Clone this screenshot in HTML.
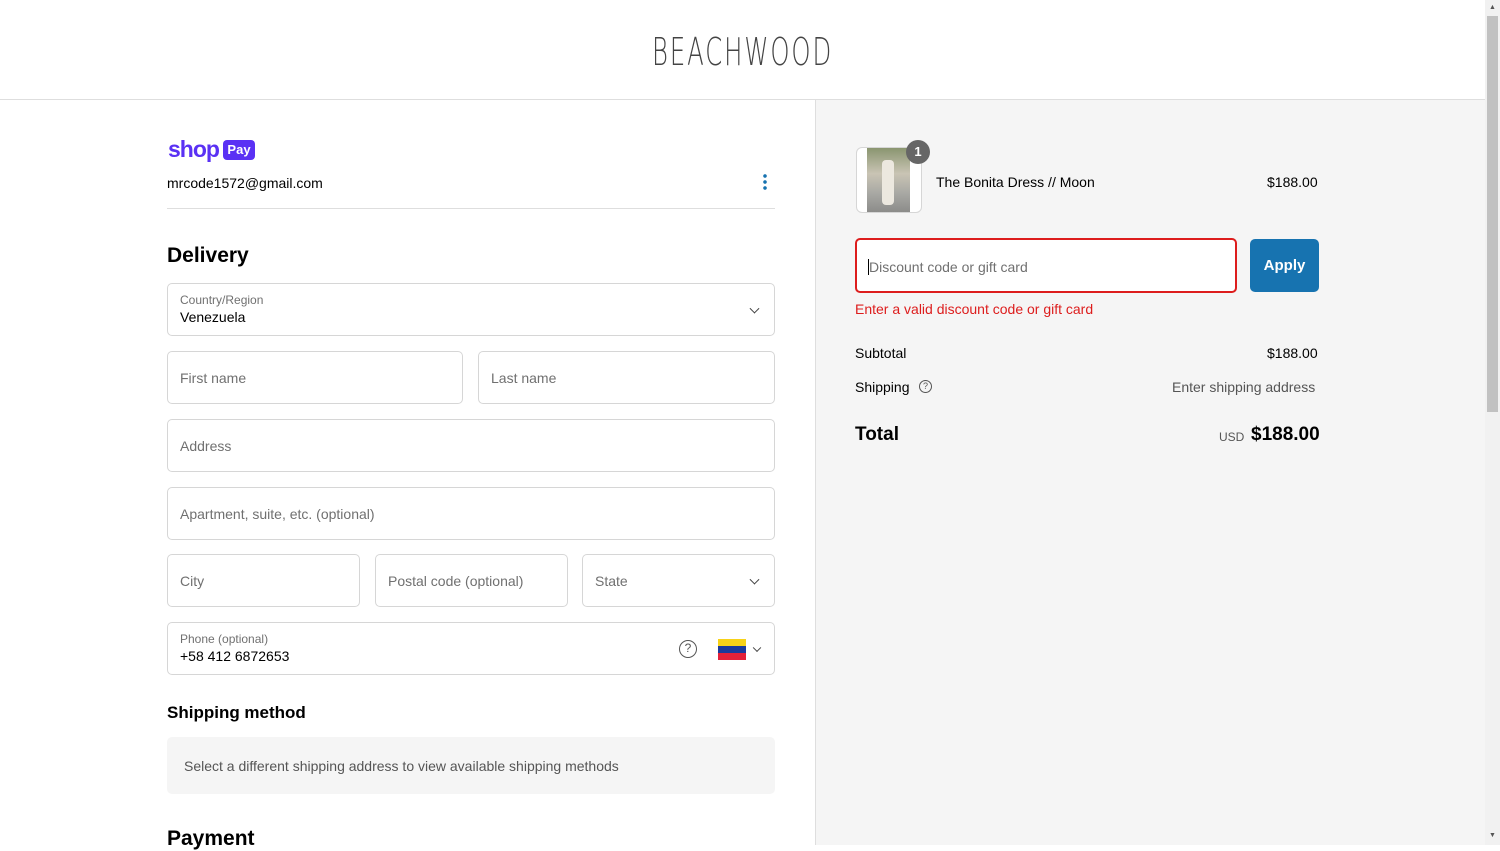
<!DOCTYPE html>
<html><head><meta charset="utf-8"><style>
*{box-sizing:border-box;margin:0;padding:0}
body{width:1500px;height:845px;overflow:hidden;font-family:"Liberation Sans",sans-serif;color:#000;background:#fff;position:relative}
.hdr{position:absolute;left:0;top:0;width:1485px;height:100px;border-bottom:1px solid #dedede;background:#fff}
.logo{position:absolute;left:652px;top:30px;font-size:38px;letter-spacing:3px;color:#444;transform:scaleX(0.64);transform-origin:left;font-family:"DejaVu Sans",sans-serif;font-weight:200}
.right{position:absolute;left:815px;top:100px;width:670px;height:745px;background:#f5f5f5;border-left:1px solid #dedede}
.sb{position:absolute;left:1485px;top:0;width:15px;height:845px;background:#f1f1f1}
.thumb{position:absolute;left:1487px;top:16px;width:11px;height:396px;background:#c1c1c1}
.a{position:absolute}
.f{position:absolute;border:1px solid #d6d6d6;border-radius:5px;background:#fff;font-size:14px;color:#707070;padding-left:12px;display:flex;align-items:center}
.lbl{font-size:12px;color:#707070}
.val{font-size:14px;color:#000}
.chev{position:absolute;right:16px;top:50%;width:7px;height:7px;border-right:1.5px solid #444;border-bottom:1.5px solid #444;transform:translateY(-70%) rotate(45deg)}
</style></head><body>
<div class="hdr"><div class="logo">BEACHWOOD</div></div>
<div class="sb"></div><div class="thumb"></div>
<div class="a" style="left:1489px;top:4px;font-size:7px;color:#555">▲</div>
<div class="a" style="left:1489px;top:832px;font-size:7px;color:#555">▼</div>

<div class="a" style="left:168px;top:136px;font-size:23px;font-weight:bold;color:#5a31f4;letter-spacing:-1px">shop</div>
<div class="a" style="left:223px;top:140px;width:32px;height:20px;background:#5a31f4;border-radius:4px;color:#fff;font-size:13px;font-weight:bold;text-align:center;line-height:20px">Pay</div>
<div class="a" style="left:167px;top:175px;font-size:14px">mrcode1572@gmail.com</div>
<div class="a" style="left:763px;top:173px;width:4px;height:17px;background:radial-gradient(circle,#1773b0 1.6px,transparent 2px) 0 0/4px 6px repeat-y"></div>
<div class="a" style="left:167px;top:208px;width:608px;height:1px;background:#dedede"></div>

<div class="a" style="left:167px;top:244px;font-size:21px;font-weight:bold">Delivery</div>
<div class="f" style="left:167px;top:283px;width:608px;height:53px;display:block;padding-top:9px"><div class="lbl">Country/Region</div><div class="val" style="margin-top:2px">Venezuela</div><div class="chev"></div></div>
<div class="f" style="left:167px;top:351px;width:296px;height:53px">First name</div>
<div class="f" style="left:478px;top:351px;width:297px;height:53px">Last name</div>
<div class="f" style="left:167px;top:419px;width:608px;height:53px">Address</div>
<div class="f" style="left:167px;top:487px;width:608px;height:53px">Apartment, suite, etc. (optional)</div>
<div class="f" style="left:167px;top:554px;width:193px;height:53px">City</div>
<div class="f" style="left:375px;top:554px;width:193px;height:53px">Postal code (optional)</div>
<div class="f" style="left:582px;top:554px;width:193px;height:53px">State<div class="chev"></div></div>
<div class="f" style="left:167px;top:622px;width:608px;height:53px;display:block;padding-top:9px"><div class="lbl">Phone (optional)</div><div class="val" style="margin-top:2px">+58 412 6872653</div>
<div class="a" style="left:511px;top:17px;width:18px;height:18px;border:1.5px solid #555;border-radius:50%;font-size:12px;text-align:center;line-height:15px;color:#555">?</div>
<div class="a" style="left:550px;top:16px;width:28px;height:21px;background:linear-gradient(#f7d218 0 33%,#1a3a9c 33% 66%,#e3213a 66%)"></div>
<div class="chev" style="right:14px;width:6px;height:6px"></div></div>

<div class="a" style="left:167px;top:703px;font-size:17px;font-weight:bold">Shipping method</div>
<div class="a" style="left:167px;top:737px;width:608px;height:57px;background:#f5f5f5;border-radius:5px;font-size:14px;color:#555;padding:21px 17px">Select a different shipping address to view available shipping methods</div>
<div class="a" style="left:167px;top:827px;font-size:21px;font-weight:bold">Payment</div>

<div class="right">
<div class="a" style="left:40px;top:47px;width:66px;height:66px;border:1px solid #d6d6d6;border-radius:6px;background:#fff"></div>
<div class="a" style="left:51px;top:48px;width:43px;height:64px;background:linear-gradient(#8a9570 0%,#c9c4b4 40%,#a9a9a4 70%,#8c8c8a 100%)"></div>
<div class="a" style="left:66px;top:60px;width:12px;height:45px;background:#ece8df;border-radius:4px"></div>
<div class="a" style="left:90px;top:40px;width:24px;height:24px;background:#666;border-radius:50%;color:#fff;font-size:13px;font-weight:bold;text-align:center;line-height:24px">1</div>
<div class="a" style="left:120px;top:74px;font-size:14px">The Bonita Dress // Moon</div>
<div class="a" style="left:451px;top:74px;font-size:14px">$188.00</div>
<div class="a" style="left:39px;top:138px;width:382px;height:55px;border:2px solid #dd1d1d;border-radius:5px;background:#fff;font-size:14px;color:#707070;padding:19px 11px"><span style="border-left:1px solid #000;margin-right:0"></span>Discount code or gift card</div>
<div class="a" style="left:434px;top:139px;width:69px;height:53px;background:#1773b0;border-radius:5px;color:#fff;font-size:15px;font-weight:bold;text-align:center;line-height:53px">Apply</div>
<div class="a" style="left:39px;top:201px;font-size:14px;color:#dd1d1d">Enter a valid discount code or gift card</div>
<div class="a" style="left:39px;top:245px;font-size:14px">Subtotal</div>
<div class="a" style="left:451px;top:245px;font-size:14px">$188.00</div>
<div class="a" style="left:39px;top:279px;font-size:14px">Shipping</div>
<div class="a" style="left:103px;top:280px;width:13px;height:13px;border:1px solid #555;border-radius:50%;font-size:9px;text-align:center;line-height:11px;color:#555">?</div>
<div class="a" style="left:356px;top:279px;font-size:14px;color:#555">Enter shipping address</div>
<div class="a" style="left:39px;top:324px;font-size:19px;font-weight:bold">Total</div>
<div class="a" style="left:403px;top:330px;font-size:12px;color:#555">USD</div>
<div class="a" style="left:435px;top:324px;font-size:19px;font-weight:bold">$188.00</div>
</div>
</body></html>
